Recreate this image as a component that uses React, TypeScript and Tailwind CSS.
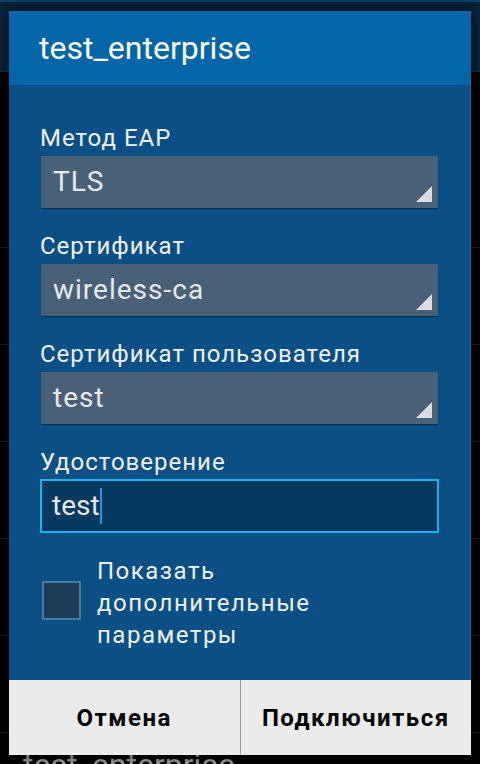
import React from "react";

const Spinner = ({ value }: { value: string }) => (
  <div className="relative mt-[4px] mx-px h-[52px] bg-[#4a6077] shadow-[0_1px_1px_rgba(0,0,0,0.45)] flex items-center pl-[12px] text-[28px] tracking-[1px] text-[#e8e8e8]">
    {value}
    <svg className="absolute right-[6px] bottom-[6px]" width="16" height="16" viewBox="0 0 16 16">
      <polygon points="16,0 16,16 0,16" fill="#d9dde0" />
    </svg>
  </div>
);

const Field = ({ label, value }: { label: string; value: string }) => (
  <div className="flex flex-col">
    <div className="h-[28px] leading-[28px] text-[24px] tracking-[1px] text-[#f0f0f0]">{label}</div>
    <Spinner value={value} />
  </div>
);

export default function App() {
  const rows = [0, 1, 2, 3, 4];

  return (
    <div className="relative w-[480px] h-[764px] bg-black overflow-hidden font-['Roboto',sans-serif]">
      {/* dimmed activity behind the dialog */}
      <div className="flex flex-col">
        <div className="h-[72px] bg-[#0a2b46] border-t-2 border-[#0b4a7a] border-b border-b-[#12395a]" />
        <div className="h-[176px] border-b border-[#262626]" />
        {rows.map((r) => (
          <div key={r} className="h-[97px] border-b border-[#262626]" />
        ))}
        <div className="pt-[13px] pl-[23px] text-[32px] leading-[38px] text-[#bdbdbd]">test_enterprise</div>
      </div>

      <div className="absolute left-[9px] top-[11px] w-[462px] flex flex-col shadow-[0_0_14px_6px_rgba(0,0,0,0.55)]">
        <div className="h-[74px] bg-[#0565a9] flex items-center pl-[30px] text-[32px] text-white">
          test_enterprise
        </div>

        <div className="bg-[#0a5086] border-r border-[#1a6aa6] pt-[39px] pb-[29px] px-[31px] flex flex-col">
          <div className="flex flex-col gap-[24px]">
            <Field label="Метод EAP" value="TLS" />
            <Field label="Сертификат" value="wireless-ca" />
            <Field label="Сертификат пользователя" value="test" />
            <div className="flex flex-col">
              <div className="h-[28px] leading-[28px] text-[24px] tracking-[1px] text-[#f0f0f0]">Удостоверение</div>
              <div className="mt-[3px] h-[54px] border-2 border-[#1ab2f0] bg-[#053a60] flex items-center pl-[10px] text-[28px] text-[#e8e8e8]">
                test
                <span className="w-[2px] h-[36px] bg-[#3b8de0]" />
              </div>
            </div>
          </div>

          <div className="mt-[22px] flex items-start">
            <div className="mt-[26px] ml-[2px] w-[39px] h-[39px] border-2 border-[#4a7aa2] bg-[#1c3c58]" />
            <div className="ml-[16px] text-[24px] leading-[32px] tracking-[1.5px] text-[#f0f0f0]">
              Показать
              <br />
              дополнительные
              <br />
              параметры
            </div>
          </div>
        </div>

        <div className="h-[75px] bg-[#ebebeb] flex">
          <button type="button" className="flex-1 font-bold text-[24px] tracking-[1.5px] text-black">
            Отмена
          </button>
          <button type="button" className="flex-1 border-l border-[#9e9e9e] font-bold text-[24px] tracking-[1.5px] text-black">
            Подключиться
          </button>
        </div>
      </div>
    </div>
  );
}
